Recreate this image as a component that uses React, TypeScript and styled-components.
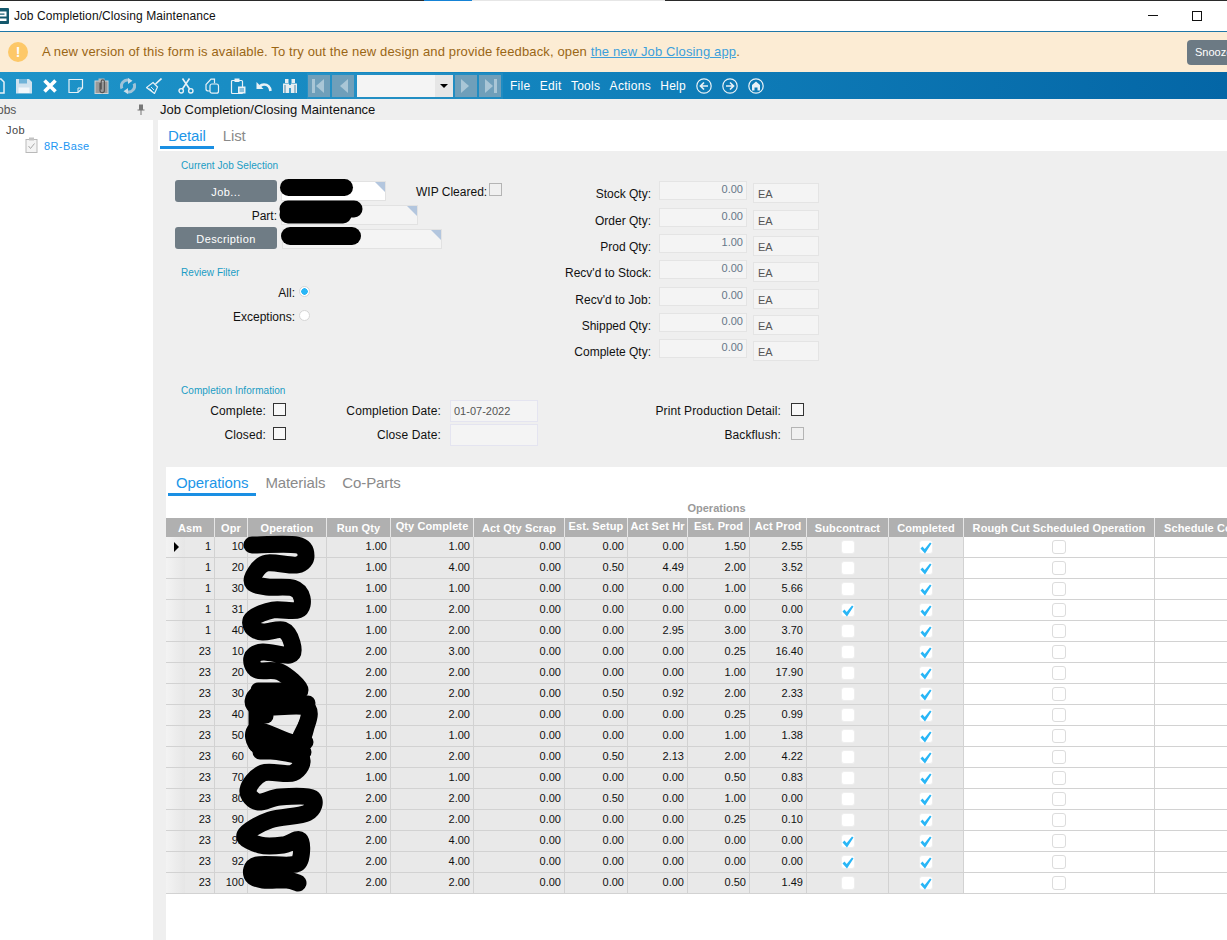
import React from "react";
import styled, { createGlobalStyle } from "styled-components";

const GlobalStyle = createGlobalStyle`
  html, body {
    margin: 0;
    overflow: hidden;
    background: #fff;
    font-family: "Liberation Sans", Arial, sans-serif;
    font-size: 12px;
    color: #111;
  }
`;

type Op = [number, number, string, string, string, string, string, string, boolean];

const operations: Op[] = [
  [1, 10, "1.00", "1.00", "0.00", "0.00", "1.50", "2.55", false],
  [1, 20, "1.00", "4.00", "0.50", "4.49", "2.00", "3.52", false],
  [1, 30, "1.00", "1.00", "0.00", "0.00", "1.00", "5.66", false],
  [1, 31, "1.00", "2.00", "0.00", "0.00", "0.00", "0.00", true],
  [1, 40, "1.00", "2.00", "0.00", "2.95", "3.00", "3.70", false],
  [23, 10, "2.00", "3.00", "0.00", "0.00", "0.25", "16.40", false],
  [23, 20, "2.00", "2.00", "0.00", "0.00", "1.00", "17.90", false],
  [23, 30, "2.00", "2.00", "0.50", "0.92", "2.00", "2.33", false],
  [23, 40, "2.00", "2.00", "0.00", "0.00", "0.25", "0.99", false],
  [23, 50, "1.00", "1.00", "0.00", "0.00", "1.00", "1.38", false],
  [23, 60, "2.00", "2.00", "0.50", "2.13", "2.00", "4.22", false],
  [23, 70, "1.00", "1.00", "0.00", "0.00", "0.50", "0.83", false],
  [23, 80, "2.00", "2.00", "0.50", "0.00", "1.00", "0.00", false],
  [23, 90, "2.00", "2.00", "0.00", "0.00", "0.25", "0.10", false],
  [23, 91, "2.00", "4.00", "0.00", "0.00", "0.00", "0.00", true],
  [23, 92, "2.00", "4.00", "0.00", "0.00", "0.00", "0.00", true],
  [23, 100, "2.00", "2.00", "0.00", "0.00", "0.50", "1.49", false],
];

const quantities = [
  ["Stock Qty:", "0.00"],
  ["Order Qty:", "0.00"],
  ["Prod Qty:", "1.00"],
  ["Recv'd to Stock:", "0.00"],
  ["Recv'd to Job:", "0.00"],
  ["Shipped Qty:", "0.00"],
  ["Complete Qty:", "0.00"],
];

const scribble = [
  [252, 545], [297, 545], [306, 556], [297, 565], [267, 563], [255, 573], [253, 583], [267, 587],
  [293, 588], [302, 598], [298, 610], [273, 610], [253, 618], [252, 627], [263, 632], [283, 630],
  [292, 643], [290, 655], [263, 652], [252, 658], [257, 670], [280, 672], [300, 690], [280, 693],
  [257, 695], [258, 707], [305, 707], [306, 727], [295, 743], [257, 730], [260, 747], [300, 757],
  [293, 773], [263, 773], [248, 790], [258, 802], [280, 797], [312, 798], [307, 813], [270, 820],
  [245, 835], [260, 845], [283, 845], [300, 840], [300, 860], [290, 865], [257, 865], [252, 875],
  [263, 880], [287, 880], [298, 883],
];

// the blot in the middle of the scribble, where the pen went over itself
const scribbleFill = [
  "M258 690H298",
  "M256 703H308",
  "M256 703V745",
  "M262 716H266",
  "M262 742H306",
  "M260 752H304",
  "M300 736L308 720",
];

function smoothPath(points: number[][]) {
  let d = `M${points[0][0]} ${points[0][1]}`;
  for (let i = 0; i < points.length - 1; i++) {
    const prev = points[Math.max(i - 1, 0)];
    const cur = points[i];
    const next = points[i + 1];
    const after = points[Math.min(i + 2, points.length - 1)];
    const c1x = cur[0] + (next[0] - prev[0]) / 6;
    const c1y = cur[1] + (next[1] - prev[1]) / 6;
    const c2x = next[0] - (after[0] - cur[0]) / 6;
    const c2y = next[1] - (after[1] - cur[1]) / 6;
    d += ` C${c1x} ${c1y} ${c2x} ${c2y} ${next[0]} ${next[1]}`;
  }
  return d;
}

const Page = styled.div`
  position: relative;
  width: 1227px;
  height: 940px;
  overflow: hidden;
  display: flex;
  flex-direction: column;
`;

const TopStrip = styled.div`
  height: 1px;
  flex: none;
  background: linear-gradient(
    to right,
    #2a2a2a 424px,
    #1583d6 424px,
    #1583d6 472px,
    #e6e6e6 472px,
    #e6e6e6 665px,
    #2a2a2a 665px
  );
`;

const TitleBar = styled.div`
  height: 30px;
  flex: none;
  display: flex;
  align-items: center;
  background: #fff;
  font-size: 12px;
  color: #111;
`;

const TitleText = styled.span`
  margin-left: 5px;
  flex: 1;
  letter-spacing: 0.09px;
`;

const WindowControls = styled.div`
  display: flex;
  align-items: center;
  gap: 34px;
  margin-right: 25px;
  padding-bottom: 1px;
`;

const MinimizeMark = styled.div`
  width: 10px;
  height: 1px;
  background: #111;
`;

const MaximizeMark = styled.div`
  width: 8px;
  height: 8px;
  border: 1px solid #111;
`;

const Banner = styled.div`
  height: 40px;
  flex: none;
  display: flex;
  align-items: center;
  overflow: hidden;
  border-top: 1px solid #1f77a8;
  background: #fcecd4;
  color: #9a6614;
  font-size: 13px;
`;

const AlertDot = styled.div`
  width: 20px;
  height: 20px;
  flex: none;
  margin-left: 8px;
  border-radius: 50%;
  background: #fdc868;
  color: #fff;
  font-weight: bold;
  font-size: 14px;
  line-height: 20px;
  text-align: center;
`;

const BannerText = styled.span`
  margin-left: 14px;
  padding-bottom: 2px;
  width: 1145px;
  flex: none;
  letter-spacing: 0.135px;
  white-space: nowrap;
`;

const BannerLink = styled.a`
  color: #3d9fdb;
  text-decoration: underline;
`;

const SnoozeButton = styled.button`
  flex: none;
  width: 70px;
  height: 25px;
  padding: 0 0 0 8px;
  border: 0;
  border-radius: 4px;
  background: #6c7a84;
  color: #fff;
  font: 11px "Liberation Sans", Arial, sans-serif;
  text-align: left;
`;

const Toolbar = styled.div`
  height: 27px;
  flex: none;
  display: flex;
  align-items: center;
  padding-left: 0;
  background: linear-gradient(to right, #1e94c9, #1283bd 45%, #0466a6);
`;

const ToolGroup = styled.div<{ $gapAfter?: number; $offset?: number }>`
  display: flex;
  margin-left: ${(p) => p.$offset ?? 0}px;
  margin-right: ${(p) => p.$gapAfter ?? 0}px;
`;

const ToolButton = styled.div`
  width: 26px;
  height: 16px;
  display: flex;
  justify-content: center;
`;

const Icon = styled.svg.attrs({ viewBox: "0 0 16 16", width: 16, height: 16 })`
  display: block;
  flex: none;
`;

const NavGroup = styled.div`
  display: flex;
  align-items: center;
  gap: 2px;
  width: 196px;
  height: 26px;
  padding-left: 1px;
  box-sizing: border-box;
  background: rgba(255, 255, 255, 0.06);
`;

const NavButton = styled.div`
  width: 22px;
  height: 22px;
  display: flex;
  align-items: center;
  justify-content: center;
  background: #6f9fba;
`;

const NavCombo = styled.div`
  width: 96px;
  height: 22px;
  margin: 0 0 0 1px;
  display: flex;
  justify-content: flex-end;
  background: #f4f4f4;
`;

const ComboArrow = styled.div`
  width: 18px;
  display: flex;
  align-items: center;
  justify-content: center;
  background: #e6e6e6;

  &::before {
    content: "";
    border-top: 4px solid #000;
    border-left: 4px solid transparent;
    border-right: 4px solid transparent;
  }
`;

const Menu = styled.div`
  display: flex;
  align-items: center;
  gap: 9.3px;
  margin-left: 7px;
  color: #fff;
  font-size: 12px;
  letter-spacing: 0.28px;
`;

const RoundIcons = styled.div`
  display: flex;
  gap: 10px;
  margin-left: 10px;
`;

const Body = styled.div`
  flex: 1;
  min-height: 0;
  display: flex;
`;

const Sidebar = styled.aside`
  width: 153px;
  flex: none;
  display: flex;
  flex-direction: column;
`;

const SidebarHeader = styled.div`
  height: 21px;
  flex: none;
  display: flex;
  align-items: center;
  justify-content: space-between;
  padding-right: 8px;
  background: #efefef;
  color: #555;
`;

const ClippedLabel = styled.span`
  margin-left: -9px;
`;

const TreeRoot = styled.div`
  margin: 4px 0 0 6px;
  font-size: 11px;
  letter-spacing: 0.5px;
  color: #444;
`;

const TreeLeaf = styled.div`
  display: flex;
  align-items: center;
  gap: 6px;
  margin: 1px 0 0 25px;
  font-size: 11px;
  letter-spacing: 0.4px;
  color: #2196f3;
`;

const LeafText = styled.span`
  padding-top: 1px;
`;

const Main = styled.main`
  flex: 1;
  min-width: 0;
  display: flex;
  flex-direction: column;
  padding-left: 5px;
  background: #efefef;
`;

const MainTitle = styled.div`
  height: 21px;
  flex: none;
  padding-left: 2px;
  font-size: 13px;
  line-height: 22px;
  color: #111;
`;

const TabBar = styled.div<{ $height: number }>`
  height: ${(p) => p.$height}px;
  flex: none;
  display: flex;
  gap: 1px;
  padding-left: 2px;
  background: #fff;
`;

const Tab = styled.div<{ $active?: boolean }>`
  height: 29px;
  box-sizing: border-box;
  padding: 0 8px;
  font-size: 15px;
  letter-spacing: -0.1px;
  line-height: 32px;
  color: ${(p) => (p.$active ? "#2196e8" : "#8a8a8a")};
  border-bottom: 3px solid ${(p) => (p.$active ? "#1a8fe3" : "transparent")};
`;

const FormPanel = styled.div`
  height: 316px;
  flex: none;
  display: flex;
  flex-direction: column;
  background: #efefef;
`;

const UpperForm = styled.div`
  height: 233px;
  flex: none;
  display: flex;
`;

const JobColumn = styled.div`
  width: 407px;
  flex: none;
  padding: 8px 0 0 17px;
  box-sizing: border-box;
`;

const Legend = styled.div<{ $top?: number; $left?: number }>`
  height: 14px;
  margin: ${(p) => p.$top ?? 0}px 0 0 ${(p) => p.$left ?? 6}px;
  font-size: 10px;
  letter-spacing: 0.05px;
  line-height: 14px;
  color: #1a9cc4;
`;

const FieldRow = styled.div<{ $top: number }>`
  display: flex;
  align-items: center;
  height: 22px;
  margin-top: ${(p) => p.$top}px;
`;

const GrayButton = styled.div`
  width: 102px;
  height: 22px;
  flex: none;
  border-radius: 3px;
  background: #6f7c85;
  color: #fff;
  font-size: 11px;
  letter-spacing: 0.4px;
  line-height: 24px;
  text-align: center;
`;

const RowLabel = styled.div<{ $width?: number; $drop?: boolean }>`
  width: ${(p) => (p.$width ? `${p.$width}px` : "auto")};
  flex: none;
  margin-top: ${(p) => (p.$drop ? 2 : 0)}px;
  text-align: right;
  white-space: nowrap;
`;

const TextField = styled.div<{ $width: number; $white?: boolean; $gap?: number; $drop?: boolean }>`
  position: relative;
  width: ${(p) => p.$width}px;
  height: 20px;
  flex: none;
  box-sizing: border-box;
  margin-left: ${(p) => p.$gap ?? 4}px;
  margin-top: ${(p) => (p.$drop ? 2 : 0)}px;
  border: 1px solid #e2e2e2;
  background: ${(p) => (p.$white ? "#fff" : "#f4f4f4")};

  &::after {
    content: "";
    position: absolute;
    top: 0;
    right: 0;
    border-top: 10px solid #b3c6de;
    border-left: 10px solid transparent;
  }
`;

const WipLabel = styled.div`
  margin: 2px 0 0 30px;
  white-space: nowrap;
`;

const CheckBox = styled.div<{ $dim?: boolean; $nudge?: number }>`
  width: 13px;
  height: 13px;
  flex: none;
  box-sizing: border-box;
  margin-left: ${(p) => p.$nudge ?? 0}px;
  border: 1px solid ${(p) => (p.$dim ? "#b4b4b4" : "#333")};
  background: ${(p) => (p.$dim ? "#f0f0f0" : "#f8f8f8")};
`;

const WipBox = styled(CheckBox)`
  margin-top: -3px;
`;

const RadioRow = styled.div<{ $top: number }>`
  display: flex;
  align-items: center;
  gap: 4px;
  height: 14px;
  margin-top: ${(p) => p.$top}px;
`;

const Radio = styled.div<{ $on?: boolean }>`
  width: 11px;
  height: 11px;
  flex: none;
  margin-top: -3px;
  box-sizing: border-box;
  border: 1px solid #d6d6d6;
  border-radius: 50%;
  background: ${(p) => (p.$on ? "radial-gradient(circle, #29b6f6 3px, #fff 3.5px)" : "#fff")};
`;

const QtyList = styled.div`
  padding-top: 30.4px;
  display: grid;
  grid-auto-rows: 26.3px;
`;

const QtyRow = styled.div`
  display: flex;
  align-items: flex-start;
`;

const QtyLabel = styled.div`
  width: 86px;
  flex: none;
  padding-top: 6px;
  text-align: right;
  white-space: nowrap;
`;

const QtyValue = styled.div`
  width: 88px;
  height: 19px;
  flex: none;
  box-sizing: border-box;
  margin-left: 8px;
  padding-right: 3px;
  border: 1px solid #e4e4e4;
  background: #f4f4f4;
  color: #667788;
  font-size: 11px;
  line-height: 14px;
  text-align: right;
`;

const QtyUnit = styled.div`
  width: 66px;
  height: 20px;
  flex: none;
  box-sizing: border-box;
  margin: 2px 0 0 6px;
  padding-left: 4px;
  border: 1px solid #e4e4e4;
  background: #f4f4f4;
  color: #555;
  font-size: 11px;
  line-height: 20px;
`;

const CompletionGrid = styled.div`
  margin-top: 2px;
  display: grid;
  grid-template-columns: 108px 20px 155px 97px 243px 23px;
  grid-auto-rows: 24px;
  align-items: center;
`;

const GridLabel = styled.div`
  padding-bottom: 3px;
  letter-spacing: 0.12px;
  text-align: right;
  white-space: nowrap;
`;

const EndBox = styled(CheckBox)`
  justify-self: end;
  margin-top: -2px;
  margin-bottom: 3px;
`;

const DateField = styled.div`
  width: 88px;
  height: 22px;
  justify-self: end;
  box-sizing: border-box;
  margin-bottom: 2px;
  padding-left: 3px;
  border: 1px solid #e4e4f0;
  background: #f4f4f4;
  color: #555;
  font-size: 11px;
  line-height: 20px;
`;

const LowerPanel = styled.section`
  flex: 1;
  min-height: 0;
  margin-left: 8px;
  background: #fff;
`;

const GridCaption = styled.div`
  height: 22px;
  width: 1101px;
  box-sizing: border-box;
  padding-top: 6px;
  color: #9a9a9a;
  font-size: 11px;
  font-weight: bold;
  line-height: 13px;
  text-align: center;
`;

const columns = "19px 30px 33px 79px 64px 83px 91px 63px 60px 62px 57px 82px 75px 191px 123px";

const OpsGrid = styled.div`
  width: 1112px;
`;

const HeaderRow = styled.div`
  display: grid;
  grid-template-columns: ${columns};
  height: 19px;
  background: #b0b0b0;
`;

const HeaderCell = styled.div<{ $span?: number; $raised?: boolean }>`
  grid-column: span ${(p) => p.$span ?? 1};
  box-sizing: border-box;
  overflow: hidden;
  border-right: 1px solid #e6e6e6;
  color: #fff;
  font-size: 11px;
  font-weight: bold;
  letter-spacing: 0.1px;
  line-height: ${(p) => (p.$raised ? 17 : 21)}px;
  text-align: center;
  white-space: nowrap;
`;

const DataRow = styled.div`
  display: grid;
  grid-template-columns: ${columns};
  height: 21px;
`;

const RowHeader = styled.div`
  display: flex;
  align-items: center;
  justify-content: center;
  box-sizing: border-box;
  border-bottom: 1px solid #d2d2d2;
  background: linear-gradient(to right, #f3f3f3, #e6e6e6);
`;

const RowPointer = styled.div`
  margin-left: 2px;
  border-left: 5px solid #000;
  border-top: 5px solid transparent;
  border-bottom: 5px solid transparent;
`;

const Cell = styled.div<{ $white?: boolean }>`
  box-sizing: border-box;
  padding: 0 3px 2px 0;
  border-right: 1px solid #d2d2d2;
  border-bottom: 1px solid #d2d2d2;
  background: ${(p) => (p.$white ? "#fff" : "#e9e9e9")};
  color: #111;
  font-size: 11px;
  line-height: 18px;
  text-align: right;
`;

const CheckCell = styled(Cell)`
  display: flex;
  align-items: center;
  justify-content: center;
  padding: 0;
`;

const GridCheck = styled.div<{ $white?: boolean }>`
  width: 14px;
  height: 14px;
  box-sizing: border-box;
  border: 1px solid ${(p) => (p.$white ? "#dcdcdc" : "#eeeeee")};
  border-radius: 3px;
  background: #fff;
`;

const Redactions = styled.svg`
  position: absolute;
  inset: 0;
  pointer-events: none;
`;

const white = "#e8f1f6";

function NewIcon() {
  return (
    <Icon>
      <path d="M2 1h9l3 3v11H2z" fill="none" stroke={white} strokeWidth="1.5" />
    </Icon>
  );
}

function SaveIcon() {
  return (
    <Icon>
      <path d="M0 1h13l3 3v11.5H0z" fill="#cfe2ee" />
      <path d="M3 1h8v4.5H3z" fill="#6fb3d8" />
      <path d="M2.5 9.5h11V15h-11z" fill="#f2f7fa" />
    </Icon>
  );
}

function CloseIcon() {
  return (
    <Icon>
      <path d="M2.5 2.5l11 11M13.5 2.5l-11 11" stroke="#fff" strokeWidth="3.6" />
    </Icon>
  );
}

function NoteIcon() {
  return (
    <Icon>
      <path d="M1 1.5h13.5v8.5l-4.5 4.5H1z" fill="none" stroke={white} strokeWidth="1.2" />
      <path d="M14 10h-4v4" fill="none" stroke={white} strokeWidth="1" />
    </Icon>
  );
}

function AttachIcon() {
  return (
    <Icon>
      <rect x="1" y="3" width="13" height="12.5" fill="#9a9a9a" stroke="#cfd4d6" />
      <rect x="4.5" y="0.5" width="6" height="3.5" fill="#b9b9b9" />
      <path d="M6 5v7.5a2.2 2.2 0 0 0 4.4 0V3.5a1.6 1.6 0 0 0-3.2 0v8" fill="none" stroke="#555" strokeWidth="1.2" />
    </Icon>
  );
}

function RefreshIcon() {
  return (
    <Icon>
      <path d="M2 10.5A6 6 0 0 1 9 2.2" fill="none" stroke="#9fc3d8" strokeWidth="3" />
      <path d="M14 5.5A6 6 0 0 1 7 13.8" fill="none" stroke="#9fc3d8" strokeWidth="3" />
      <path d="M8 0l4.5 2.7L8 6zM8 16l-4.5-2.7L8 10z" fill="#c9dde9" />
    </Icon>
  );
}

function BroomIcon() {
  return (
    <Icon>
      <path d="M15.5 0.5L9.5 6" stroke={white} strokeWidth="1.6" />
      <path d="M7 4.5l4.5 4.5-3 6.5L0.5 9.5z" fill="none" stroke={white} strokeWidth="1.2" />
      <path d="M5 9l3 3M3.5 10.5l3 3" stroke={white} strokeWidth="0.9" />
    </Icon>
  );
}

function ScissorsIcon() {
  return (
    <Icon>
      <circle cx="3.2" cy="12.8" r="2.2" fill="none" stroke={white} strokeWidth="1.4" />
      <circle cx="12.8" cy="12.8" r="2.2" fill="none" stroke={white} strokeWidth="1.4" />
      <path d="M4.4 11L11.5 0.5M11.6 11L4.5 0.5" stroke={white} strokeWidth="1.6" />
    </Icon>
  );
}

function CopyIcon() {
  return (
    <Icon>
      <path d="M2 11V6.5L7 1.2h3.5v4" fill="none" stroke={white} strokeWidth="1.2" />
      <rect x="6" y="6" width="8.5" height="9.2" rx="2" fill="none" stroke={white} strokeWidth="1.2" />
      <path d="M2 11c0 1.5 1 2 2.5 2H6" fill="none" stroke={white} strokeWidth="1.2" />
    </Icon>
  );
}

function PasteIcon() {
  return (
    <Icon>
      <rect x="1.5" y="2.5" width="11" height="13" rx="1" fill="none" stroke={white} strokeWidth="1.2" />
      <rect x="4.5" y="0.5" width="5" height="3.5" fill={white} />
      <path d="M8 8.5h7.5V15.5H8z" fill={white} />
      <path d="M9.5 11h4.5M9.5 13h4.5" stroke="#2a8dbf" strokeWidth="1" />
    </Icon>
  );
}

function UndoIcon() {
  return (
    <Icon>
      <path d="M14.5 13c-.5-4-3-6.5-6.5-6.5-2 0-3.2.7-4.4 2" fill="none" stroke={white} strokeWidth="2.6" />
      <path d="M0.5 4v7h7z" fill={white} />
    </Icon>
  );
}

function BinocularsIcon() {
  return (
    <Icon>
      <path d="M3 1h3.5v4H3zM9.5 1H13v4H9.5zM1 5.5h6.2V15H1zM8.8 5.5H15V15H8.8zM7.2 7h1.6v3H7.2z" fill="#e6eef2" />
      <path d="M3 7v8M13 7v8" stroke="#7ca6bd" strokeWidth="1.4" />
    </Icon>
  );
}

function NavMark({ dir, bar }: { dir: "left" | "right"; bar?: boolean }) {
  const fill = "#a9c6d6";
  return (
    <Icon>
      {dir === "left" ? <path d="M13 1v14L5 8z" fill={fill} /> : <path d="M3 1v14l8-7z" fill={fill} />}
      {bar && <rect x={dir === "left" ? 1 : 12} y="1" width="3" height="14" fill={fill} />}
    </Icon>
  );
}

function RoundIcon({ kind }: { kind: "back" | "forward" | "home" }) {
  return (
    <Icon>
      <circle cx="8" cy="8" r="7.2" fill="none" stroke={white} strokeWidth="1.2" />
      {kind === "back" && <path d="M12 8H5M8 4.5L4.5 8 8 11.5" fill="none" stroke={white} strokeWidth="1.7" />}
      {kind === "forward" && <path d="M4 8h7M8 4.5L11.5 8 8 11.5" fill="none" stroke={white} strokeWidth="1.7" />}
      {kind === "home" && <path d="M8 3.5l4 3.5v5.5H9.5V9.5h-3v3H4V7z" fill={white} />}
    </Icon>
  );
}

function Logo() {
  return (
    <svg width="17" height="16" viewBox="0 0 17 16" style={{ marginLeft: -8, flex: "none" }}>
      <rect width="17" height="16" rx="1" fill="#14586c" />
      <path d="M0 3.5h14.5v5H0zM0 10.5h14.5v2.5H0z" fill="#fff" />
      <path d="M0 5.5h12.5v1.2H0z" fill="#14586c" />
    </svg>
  );
}

function TreeIcon() {
  return (
    <svg width="13" height="16" viewBox="0 0 13 16">
      <rect x="1" y="2.5" width="11" height="13" fill="#f4f4f4" stroke="#b9b9b9" />
      <rect x="4" y="0.5" width="5" height="3" fill="#c4c4c4" />
      <path d="M3.5 9l2 2.5 4-5" fill="none" stroke="#a8a8a8" />
    </svg>
  );
}

function PinIcon() {
  return (
    <svg width="8" height="11" viewBox="0 0 8 11">
      <path d="M2 0.5h4v5h1.5v1h-3V11h-1V6.5h-3v-1H2z" fill="#777" />
    </svg>
  );
}

function BlueCheck() {
  return (
    <svg width="12" height="12" viewBox="0 0 12 12">
      <path d="M0.5 6.5l2-2 2.2 2.6L10 0.5l1.5 1L5 11.5z" fill="#29b6f6" />
    </svg>
  );
}

const firstTools = [NewIcon, SaveIcon, CloseIcon, NoteIcon, AttachIcon, RefreshIcon, BroomIcon];
const secondTools = [ScissorsIcon, CopyIcon, PasteIcon, UndoIcon, BinocularsIcon];
const menuItems = ["File", "Edit", "Tools", "Actions", "Help"];

export default function App() {
  return (
    <Page>
      <GlobalStyle />
      <TopStrip />
      <TitleBar>
        <Logo />
        <TitleText>Job Completion/Closing Maintenance</TitleText>
        <WindowControls>
          <MinimizeMark />
          <MaximizeMark />
        </WindowControls>
      </TitleBar>
      <Banner>
        <AlertDot>!</AlertDot>
        <BannerText>
          A new version of this form is available. To try out the new design and provide feedback, open{" "}
          <BannerLink>the new Job Closing app</BannerLink>.
        </BannerText>
        <SnoozeButton>Snooze</SnoozeButton>
      </Banner>
      <Toolbar>
        <ToolGroup $offset={-15} $gapAfter={6}>
          {firstTools.map((Tool, i) => (
            <ToolButton key={i}>
              <Tool />
            </ToolButton>
          ))}
        </ToolGroup>
        <ToolGroup $gapAfter={4}>
          {secondTools.map((Tool, i) => (
            <ToolButton key={i}>
              <Tool />
            </ToolButton>
          ))}
        </ToolGroup>
        <NavGroup>
          <NavButton>
            <NavMark dir="left" bar />
          </NavButton>
          <NavButton>
            <NavMark dir="left" />
          </NavButton>
          <NavCombo>
            <ComboArrow />
          </NavCombo>
          <NavButton>
            <NavMark dir="right" />
          </NavButton>
          <NavButton>
            <NavMark dir="right" bar />
          </NavButton>
        </NavGroup>
        <Menu>
          {menuItems.map((item) => (
            <span key={item}>{item}</span>
          ))}
        </Menu>
        <RoundIcons>
          <RoundIcon kind="back" />
          <RoundIcon kind="forward" />
          <RoundIcon kind="home" />
        </RoundIcons>
      </Toolbar>
      <Body>
        <Sidebar>
          <SidebarHeader>
            <ClippedLabel>Jobs</ClippedLabel>
            <PinIcon />
          </SidebarHeader>
          <TreeRoot>Job</TreeRoot>
          <TreeLeaf>
            <TreeIcon />
            <LeafText>8R-Base</LeafText>
          </TreeLeaf>
        </Sidebar>
        <Main>
          <MainTitle>Job Completion/Closing Maintenance</MainTitle>
          <TabBar $height={31}>
            <Tab $active>Detail</Tab>
            <Tab>List</Tab>
          </TabBar>
          <FormPanel>
            <UpperForm>
              <JobColumn>
                <Legend>Current Job Selection</Legend>
                <FieldRow $top={7}>
                  <GrayButton>Job...</GrayButton>
                  <TextField $width={105} $white />
                  <WipLabel>WIP Cleared:</WipLabel>
                  <WipBox $dim $nudge={2} />
                </FieldRow>
                <FieldRow $top={2}>
                  <RowLabel $width={102} $drop>
                    Part:
                  </RowLabel>
                  <TextField $width={137} />
                </FieldRow>
                <FieldRow $top={1}>
                  <GrayButton>Description</GrayButton>
                  <TextField $width={160} $gap={5} $drop />
                </FieldRow>
                <Legend $top={17}>Review Filter</Legend>
                <RadioRow $top={6}>
                  <RowLabel $width={120}>All:</RowLabel>
                  <Radio $on />
                </RadioRow>
                <RadioRow $top={10}>
                  <RowLabel $width={120}>Exceptions:</RowLabel>
                  <Radio />
                </RadioRow>
              </JobColumn>
              <QtyList>
                {quantities.map(([label, value]) => (
                  <QtyRow key={label}>
                    <QtyLabel>{label}</QtyLabel>
                    <QtyValue>{value}</QtyValue>
                    <QtyUnit>EA</QtyUnit>
                  </QtyRow>
                ))}
              </QtyList>
            </UpperForm>
            <Legend $left={23}>Completion Information</Legend>
            <CompletionGrid>
              <GridLabel>Complete:</GridLabel>
              <EndBox />
              <GridLabel>Completion Date:</GridLabel>
              <DateField>01-07-2022</DateField>
              <GridLabel>Print Production Detail:</GridLabel>
              <EndBox />
              <GridLabel>Closed:</GridLabel>
              <EndBox />
              <GridLabel>Close Date:</GridLabel>
              <DateField />
              <GridLabel>Backflush:</GridLabel>
              <EndBox $dim />
            </CompletionGrid>
          </FormPanel>
          <LowerPanel>
            <TabBar $height={29}>
              <Tab $active>Operations</Tab>
              <Tab>Materials</Tab>
              <Tab>Co-Parts</Tab>
            </TabBar>
            <GridCaption>Operations</GridCaption>
            <OpsGrid>
              <HeaderRow>
                <HeaderCell $span={2}>Asm</HeaderCell>
                <HeaderCell>Opr</HeaderCell>
                <HeaderCell>Operation</HeaderCell>
                <HeaderCell>Run Qty</HeaderCell>
                <HeaderCell $raised>Qty Complete</HeaderCell>
                <HeaderCell>Act Qty Scrap</HeaderCell>
                <HeaderCell $raised>Est. Setup</HeaderCell>
                <HeaderCell $raised>Act Set Hr</HeaderCell>
                <HeaderCell $raised>Est. Prod</HeaderCell>
                <HeaderCell $raised>Act Prod</HeaderCell>
                <HeaderCell>Subcontract</HeaderCell>
                <HeaderCell>Completed</HeaderCell>
                <HeaderCell>Rough Cut Scheduled Operation</HeaderCell>
                <HeaderCell>Schedule Complete</HeaderCell>
              </HeaderRow>
              {operations.map((op, i) => (
                <DataRow key={i}>
                  <RowHeader>{i === 0 && <RowPointer />}</RowHeader>
                  <Cell>{op[0]}</Cell>
                  <Cell>{op[1]}</Cell>
                  <Cell />
                  <Cell>{op[2]}</Cell>
                  <Cell>{op[3]}</Cell>
                  <Cell>0.00</Cell>
                  <Cell>{op[4]}</Cell>
                  <Cell>{op[5]}</Cell>
                  <Cell>{op[6]}</Cell>
                  <Cell>{op[7]}</Cell>
                  <CheckCell>
                    <GridCheck>{op[8] && <BlueCheck />}</GridCheck>
                  </CheckCell>
                  <CheckCell>
                    <GridCheck>
                      <BlueCheck />
                    </GridCheck>
                  </CheckCell>
                  <CheckCell $white>
                    <GridCheck $white />
                  </CheckCell>
                  <Cell $white />
                </DataRow>
              ))}
            </OpsGrid>
          </LowerPanel>
        </Main>
      </Body>
      <Redactions width="1227" height="940" viewBox="0 0 1227 940">
        <g fill="none" stroke="#000" strokeLinecap="round" strokeLinejoin="round">
          <path d="M288.5 187.5h56" strokeWidth="17" />
          <path d="M288 209h66" strokeWidth="17" />
          <path d="M288 215h55" strokeWidth="17" />
          <path d="M290 236h62" strokeWidth="18" />
          <path d={smoothPath(scribble)} strokeWidth="17" />
          {scribbleFill.map((d) => (
            <path key={d} d={d} strokeWidth="15" />
          ))}
        </g>
      </Redactions>
    </Page>
  );
}
